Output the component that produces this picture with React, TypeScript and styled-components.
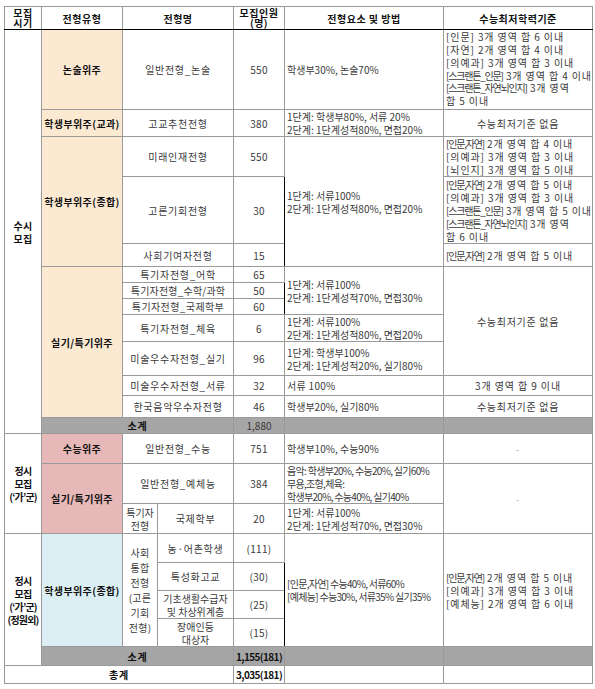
import styled, { createGlobalStyle } from 'styled-components';

const GlobalStyle = createGlobalStyle`
  html, body {
    margin: 0;
    padding: 0;
    background: #ffffff;
  }
  body {
    font-family: "Noto Sans CJK KR", "Noto Sans", sans-serif;
  }
`;

const BEIGE = '#fce9d2';
const PINK = '#e6b8b7';
const BLUE = '#daeef3';
const GRAY = '#a6a6a6';

const Page = styled.div`
  padding: 6px 3px 6px 4px;
`;

const Table = styled.table`
  width: 588px;
  border-collapse: collapse;
  table-layout: fixed;
  border: 1.5px solid #000;
`;

const Row = styled.tr<{ $h: number; $dark?: boolean }>`
  height: ${(p) => p.$h}px;
  ${(p) => p.$dark && `& > td, & > th { border-top: 1.5px solid #000; }`}
`;

const HeadCell = styled.th<{ $tight?: boolean; $dl?: boolean }>`
  border: 1px solid #9a9a9a;
  border-bottom: 1.5px solid #000;
  ${(p) => p.$dl && `border-left: 1.5px solid #000;`}
  padding: 0;
  font-size: 10px;
  line-height: ${(p) => (p.$tight ? '10.5px' : '13px')};
  letter-spacing: 0.5px;
  font-weight: 700;
  color: #111;
  text-align: center;
  vertical-align: middle;
`;

const Cell = styled.td<{
  $bg?: string;
  $bold?: boolean;
  $left?: boolean;
  $dl?: boolean;
  $lh?: number;
  $ls?: number;
}>`
  border: 1px solid #9a9a9a;
  ${(p) => p.$dl && `border-left: 1.5px solid #000;`}
  padding: ${(p) => (p.$left ? '0 1px 0 2px' : '0 1px')};
  background: ${(p) => p.$bg || '#ffffff'};
  font-size: 10px;
  line-height: ${(p) => p.$lh || 13}px;
  letter-spacing: ${(p) => (p.$ls ?? 0.7)}px;
  font-weight: ${(p) => (p.$bold ? 700 : 400)};
  color: ${(p) => (p.$bold ? '#111' : '#3a3a3a')};
  text-align: ${(p) => (p.$left ? 'left' : 'center')};
  vertical-align: middle;
  overflow: hidden;
`;

const Period = styled.div`
  white-space: nowrap;
  letter-spacing: -0.8px;
`;

const Line = styled.div<{ $mode?: 'tight' | 'wide' }>`
  white-space: nowrap;
  letter-spacing: ${(p) => (p.$mode === 'tight' ? '-0.7px' : p.$mode === 'wide' ? '0.9px' : '0')};
`;

const Cond = styled.span`
  letter-spacing: -1.2px;
`;

const Dash = styled.span`
  color: #9a9a9a;
  font-size: 9px;
`;

const Total = styled.span`
  letter-spacing: -0.6px;
`;

const Lines = ({ items, mode }: { items: React.ReactNode[]; mode?: 'tight' | 'wide' }) => (
  <>
    {items.map((t, i) => (
      <Line key={i} $mode={mode}>
        {t}
      </Line>
    ))}
  </>
);

const NoMin = '수능최저기준 없음';

const App = () => {
  return (
    <Page>
      <GlobalStyle />
      <Table>
        <colgroup>
          <col style={{ width: 37 }} />
          <col style={{ width: 81 }} />
          <col style={{ width: 35 }} />
          <col style={{ width: 76 }} />
          <col style={{ width: 51 }} />
          <col style={{ width: 159 }} />
          <col style={{ width: 149 }} />
        </colgroup>
        <tbody>
          <Row $h={23}>
            <HeadCell $tight>
              모집
              <br />
              시기
            </HeadCell>
            <HeadCell $dl>전형유형</HeadCell>
            <HeadCell colSpan={2}>전형명</HeadCell>
            <HeadCell $tight>
              모집인원
              <br />
              (명)
            </HeadCell>
            <HeadCell $dl>전형요소 및 방법</HeadCell>
            <HeadCell>수능최저학력기준</HeadCell>
          </Row>

          {/* 수시 모집 */}
          <Row $h={80} $dark>
            <Cell rowSpan={13} $bold $ls={0.3}>
              수시
              <br />
              모집
            </Cell>
            <Cell $bg={BEIGE} $bold $dl $ls={0.4}>
              논술위주
            </Cell>
            <Cell colSpan={2}>일반전형_논술</Cell>
            <Cell $ls={0.3}>550</Cell>
            <Cell $left $dl $ls={0}>
              학생부30%, 논술70%
            </Cell>
            <Cell $left $lh={12.8} $ls={0}>
              <Lines
                mode="wide"
                items={[
                  '[인문] 3개 영역 합 6 이내',
                  '[자연] 2개 영역 합 4 이내',
                  '[의예과] 3개 영역 합 3 이내',
                  <>
                    <Cond>[스크랜튼_인문]</Cond> 3개 영역 합 4 이내
                  </>,
                  <>
                    <Cond>[스크랜튼_자연뇌인지]</Cond> 3개 영역
                  </>,
                  '합 5 이내',
                ]}
              />
            </Cell>
          </Row>
          <Row $h={27} $dark>
            <Cell $bg={BEIGE} $bold $dl $ls={0.4}>
              학생부위주(교과)
            </Cell>
            <Cell colSpan={2}>고교추천전형</Cell>
            <Cell $ls={0.3}>380</Cell>
            <Cell $left $dl $ls={0}>
              <Lines items={['1단계: 학생부80%, 서류 20%', '2단계: 1단계성적80%, 면접20%']} />
            </Cell>
            <Cell>{NoMin}</Cell>
          </Row>
          <Row $h={40} $dark>
            <Cell rowSpan={3} $bg={BEIGE} $bold $dl $ls={0.4}>
              학생부위주(종합)
            </Cell>
            <Cell colSpan={2}>미래인재전형</Cell>
            <Cell $ls={0.3}>550</Cell>
            <Cell rowSpan={3} $left $dl $ls={0}>
              <Lines items={['1단계: 서류100%', '2단계: 1단계성적80%, 면접20%']} />
            </Cell>
            <Cell $left $ls={0}>
              <Lines
                mode="wide"
                items={[
                  <>
                    <Cond>[인문,자연]</Cond> 2개 영역 합 4 이내
                  </>,
                  '[의예과] 3개 영역 합 3 이내',
                  '[뇌인지] 3개 영역 합 5 이내',
                ]}
              />
            </Cell>
          </Row>
          <Row $h={67}>
            <Cell colSpan={2}>고른기회전형</Cell>
            <Cell $ls={0.3}>30</Cell>
            <Cell $left $ls={0}>
              <Lines
                mode="wide"
                items={[
                  <>
                    <Cond>[인문,자연]</Cond> 2개 영역 합 5 이내
                  </>,
                  '[의예과] 3개 영역 합 3 이내',
                  <>
                    <Cond>[스크랜튼_인문]</Cond> 3개 영역 합 5 이내
                  </>,
                  <>
                    <Cond>[스크랜튼_자연뇌인지]</Cond> 3개 영역
                  </>,
                  '합 6 이내',
                ]}
              />
            </Cell>
          </Row>
          <Row $h={23}>
            <Cell colSpan={2}>사회기여자전형</Cell>
            <Cell $ls={0.3}>15</Cell>
            <Cell $left $ls={0}>
              <Lines
                mode="wide"
                items={[
                  <>
                    <Cond>[인문,자연]</Cond> 2개 영역 합 5 이내
                  </>,
                ]}
              />
            </Cell>
          </Row>
          <Row $h={16} $dark>
            <Cell rowSpan={7} $bg={BEIGE} $bold $dl $ls={0.4}>
              실기/특기위주
            </Cell>
            <Cell colSpan={2}>특기자전형_어학</Cell>
            <Cell $ls={0.3}>65</Cell>
            <Cell rowSpan={3} $left $dl $ls={0}>
              <Lines items={['1단계: 서류100%', '2단계: 1단계성적70%, 면접30%']} />
            </Cell>
            <Cell rowSpan={5}>{NoMin}</Cell>
          </Row>
          <Row $h={16}>
            <Cell colSpan={2} $ls={0.2}>
              특기자전형_수학/과학
            </Cell>
            <Cell $ls={0.3}>50</Cell>
          </Row>
          <Row $h={16}>
            <Cell colSpan={2} $ls={0.4}>
              특기자전형_국제학부
            </Cell>
            <Cell $ls={0.3}>60</Cell>
          </Row>
          <Row $h={26}>
            <Cell colSpan={2}>특기자전형_체육</Cell>
            <Cell $ls={0.3}>6</Cell>
            <Cell $left $dl $ls={0}>
              <Lines items={['1단계: 서류100%', '2단계: 1단계성적80%, 면접20%']} />
            </Cell>
          </Row>
          <Row $h={34}>
            <Cell colSpan={2}>미술우수자전형_실기</Cell>
            <Cell $ls={0.3}>96</Cell>
            <Cell $left $dl $ls={0}>
              <Lines items={['1단계: 학생부100%', '2단계: 1단계성적20%, 실기80%']} />
            </Cell>
          </Row>
          <Row $h={20}>
            <Cell colSpan={2}>미술우수자전형_서류</Cell>
            <Cell $ls={0.3}>32</Cell>
            <Cell $left $dl $ls={0.3}>
              서류 100%
            </Cell>
            <Cell $ls={0.9}>3개 영역 합 9 이내</Cell>
          </Row>
          <Row $h={22}>
            <Cell colSpan={2}>한국음악우수자전형</Cell>
            <Cell $ls={0.3}>46</Cell>
            <Cell $left $dl $ls={0}>
              학생부20%, 실기80%
            </Cell>
            <Cell>{NoMin}</Cell>
          </Row>
          <Row $h={16} $dark>
            <Cell colSpan={3} $bg={GRAY} $bold $dl>
              소계
            </Cell>
            <Cell $bg={GRAY} $ls={0}>
              1,880
            </Cell>
            <Cell $bg={GRAY} $dl />
            <Cell $bg={GRAY} />
          </Row>

          {/* 정시 모집 */}
          <Row $h={30} $dark>
            <Cell rowSpan={3} $bold $ls={0}>
              <Period>정시</Period>
              <Period>모집</Period>
              <Period>(‘가’군)</Period>
            </Cell>
            <Cell $bg={PINK} $bold $dl $ls={0.4}>
              수능위주
            </Cell>
            <Cell colSpan={2}>일반전형_수능</Cell>
            <Cell $ls={0.3}>751</Cell>
            <Cell $left $dl $ls={0}>
              학생부10%, 수능90%
            </Cell>
            <Cell>
              <Dash>-</Dash>
            </Cell>
          </Row>
          <Row $h={39} $dark>
            <Cell rowSpan={2} $bg={PINK} $bold $dl $ls={0.4}>
              실기/특기위주
            </Cell>
            <Cell colSpan={2}>일반전형_예체능</Cell>
            <Cell $ls={0.3}>384</Cell>
            <Cell $left $dl $ls={0}>
              <Lines
                mode="tight"
                items={['음악: 학생부20%, 수능20%, 실기60%', '무용,조형,체육:', '학생부20%, 수능40%, 실기40%']}
              />
            </Cell>
            <Cell rowSpan={2}>
              <Dash>-</Dash>
            </Cell>
          </Row>
          <Row $h={30}>
            <Cell $ls={0}>
              특기자
              <br />
              전형
            </Cell>
            <Cell>국제학부</Cell>
            <Cell $ls={0.3}>20</Cell>
            <Cell $left $dl $ls={0}>
              <Lines items={['1단계: 서류100%', '2단계: 1단계성적70%, 면접30%']} />
            </Cell>
          </Row>

          {/* 정시 모집 (정원외) */}
          <Row $h={29} $dark>
            <Cell rowSpan={5} $bold $ls={0}>
              <Period>정시</Period>
              <Period>모집</Period>
              <Period>(‘가’군)</Period>
              <Period>(정원외)</Period>
            </Cell>
            <Cell rowSpan={4} $bg={BLUE} $bold $dl $ls={0.4}>
              학생부위주(종합)
            </Cell>
            <Cell rowSpan={4} $lh={15} $ls={0.3}>
              사회
              <br />
              통합
              <br />
              전형
              <br />
              (고른
              <br />
              기회
              <br />
              전형)
            </Cell>
            <Cell>농·어촌학생</Cell>
            <Cell $ls={0.3}>(111)</Cell>
            <Cell rowSpan={4} $left $dl $ls={0}>
              <Lines mode="tight" items={['[인문,자연] 수능40%, 서류60%', '[예체능] 수능30%, 서류35% 실기35%']} />
            </Cell>
            <Cell rowSpan={4} $left $ls={0}>
              <Lines
                mode="wide"
                items={[
                  <>
                    <Cond>[인문,자연]</Cond> 2개 영역 합 5 이내
                  </>,
                  '[의예과] 3개 영역 합 3 이내',
                  '[예체능] 2개 영역 합 6 이내',
                ]}
              />
            </Cell>
          </Row>
          <Row $h={28}>
            <Cell>특성화고교</Cell>
            <Cell $ls={0.3}>(30)</Cell>
          </Row>
          <Row $h={28}>
            <Cell $ls={0.3}>
              <Lines items={['기초생활수급자', '및 차상위계층']} />
            </Cell>
            <Cell $ls={0.3}>(25)</Cell>
          </Row>
          <Row $h={28}>
            <Cell>
              <Lines items={['장애인등', '대상자']} />
            </Cell>
            <Cell $ls={0.3}>(15)</Cell>
          </Row>
          <Row $h={19} $dark>
            <Cell colSpan={3} $bg={GRAY} $bold $dl>
              소계
            </Cell>
            <Cell $bg={GRAY} $bold $ls={0}>
              <Total>1,155(181)</Total>
            </Cell>
            <Cell $bg={GRAY} $dl />
            <Cell $bg={GRAY} />
          </Row>
          <Row $h={18} $dark>
            <Cell colSpan={4} $bold>
              총계
            </Cell>
            <Cell $bold $ls={0}>
              <Total>3,035(181)</Total>
            </Cell>
            <Cell $dl />
            <Cell />
          </Row>
        </tbody>
      </Table>
    </Page>
  );
};

export default App;
